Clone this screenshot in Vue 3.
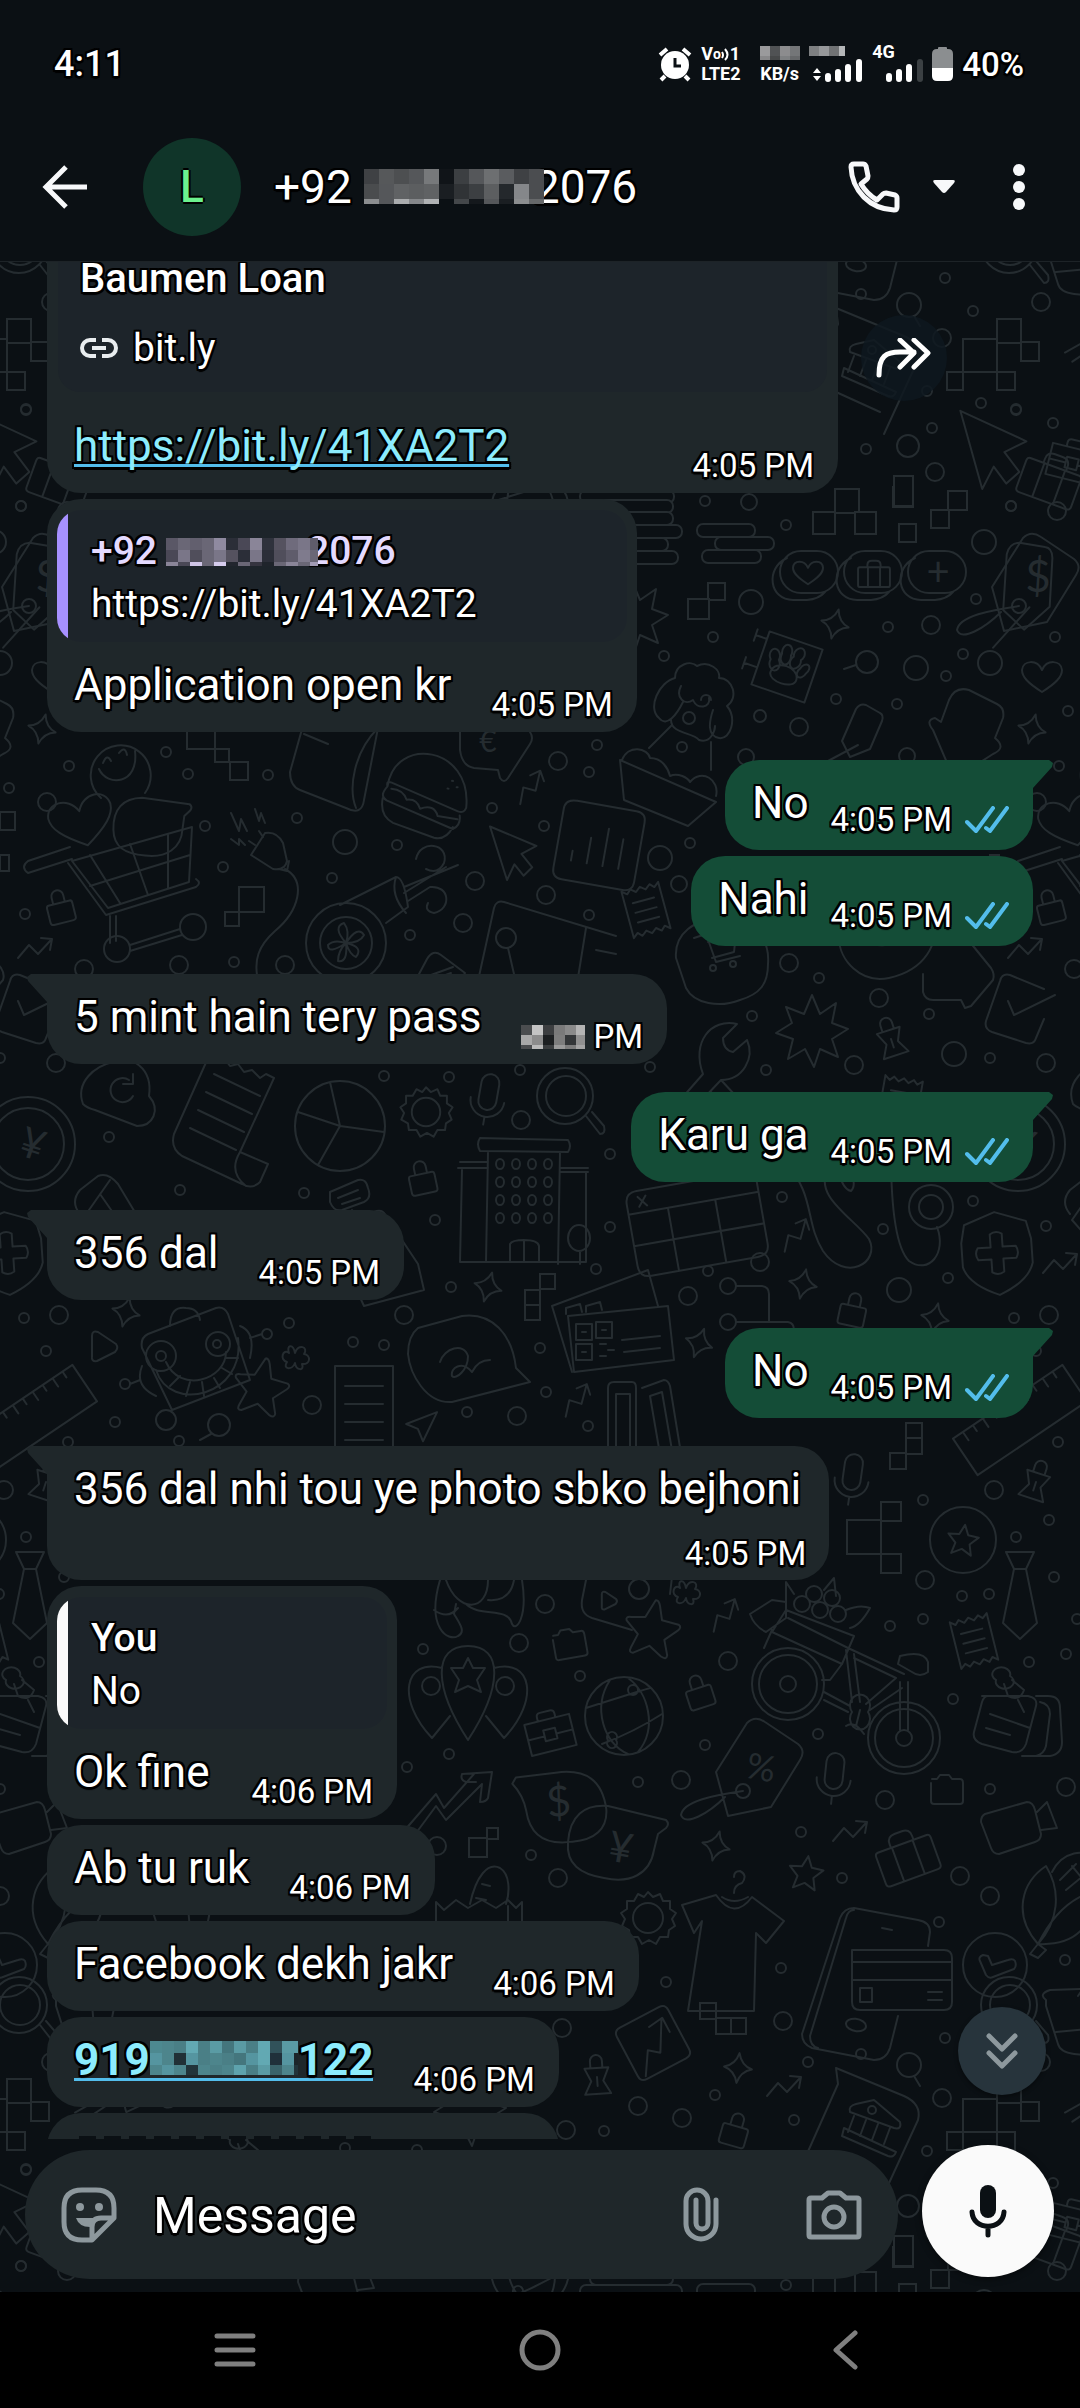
<script setup>
import { ref } from 'vue'

const draft = ref('')

const messages = [
  { id: 1, side: 'in', kind: 'preview', title: 'Baumen Loan', host: 'bit.ly', text: 'https://bit.ly/41XA2T2', time: '4:05 PM', link: true },
  { id: 2, side: 'in', quote: { who: 'contact', text: 'https://bit.ly/41XA2T2' }, text: 'Application open kr', time: '4:05 PM' },
  { id: 3, side: 'out', tail: true, text: 'No', time: '4:05 PM' },
  { id: 4, side: 'out', text: 'Nahi', time: '4:05 PM' },
  { id: 5, side: 'in', tail: true, text: '5 mint hain tery pass', time: 'PM', hiddenTime: true },
  { id: 6, side: 'out', tail: true, text: 'Karu ga', time: '4:05 PM' },
  { id: 7, side: 'in', tail: true, text: '356 dal', time: '4:05 PM' },
  { id: 8, side: 'out', tail: true, text: 'No', time: '4:05 PM' },
  { id: 9, side: 'in', tail: true, wide: true, text: '356 dal nhi tou ye photo sbko bejhoni', time: '4:05 PM' },
  { id: 10, side: 'in', quote: { who: 'me', name: 'You', text: 'No' }, text: 'Ok fine', time: '4:06 PM' },
  { id: 11, side: 'in', text: 'Ab tu ruk', time: '4:06 PM' },
  { id: 12, side: 'in', text: 'Facebook dekh jakr', time: '4:06 PM' },
  { id: 13, side: 'in', phone: ['919', '122'], time: '4:06 PM' },
]

// Pixelated masks: rows of grey levels or colours, one entry per cell
const masks = {
  title: {
    w: 180, h: 35,
    rows: [
      ['#3f4144', '#56585a', '#4d4f51', '#55575a', '#77797b', '#101418', '#3c3f42', '#55575a', '#6d6f71', '#5a5c5f', '#3f4144', '#4b4d50'],
      ['#4a4c4e', '#55575a', '#606264', '#5c5e60', '#606264', '#1a1e22', '#303336', '#3c3f42', '#5c5e60', '#24282c', '#85878a', '#4b4d50'],
      ['#8b8d8f', '#55575a', '#aaacae', '#85878a', '#b0b2b4', '#0b1014', '#44474a', '#14181c', '#55575a', '#1a1e22', '#8b8d8f', '#66686a'],
    ],
  },
  quote: {
    w: 152, h: 28,
    rows: [
      ['#5a5766', '#6a6776', '#625f6e', '#6a6776', '#8f8aa0', '#2b2e38', '#4a4856', '#8a8598', '#2f323c', '#55525f', '#6f6b7c', '#7a7688', '#5f5c6b'],
      ['#4a4856', '#7a7688', '#504e5b', '#6a6776', '#7a7688', '#55525f', '#2b2e38', '#7a7688', '#2b2e38', '#504e5b', '#5f5c6b', '#7f7b8d', '#6a6776'],
      ['#8a8598', '#4a4856', '#cfc5e6', '#6a6776', '#d6cced', '#22262e', '#6a6776', '#35343f', '#1f242b', '#6a6776', '#8a8598', '#6a6776', '#a29bb5'],
    ],
  },
  time: {
    w: 64, h: 24,
    rows: [
      ['#4b4d4f', '#c4c4c4', '#3c3e40', '#7a7a7a', '#8a8a8a', '#b4b4b4'],
      ['#a8a8a8', '#8c8c8c', '#1c1f21', '#7d7d7d', '#333638', '#909090'],
      ['#4a4c4e', '#bababa', '#3a3d3f', '#9a9a9a', '#7d7d7d', '#a4a4a4'],
    ],
  },
  phone: {
    w: 148, h: 34,
    rows: [
      ['#4d8990', '#4d858c', '#4a7f86', '#62a9b3', '#4a7f86', '#5a9ba4', '#44767d', '#5a9ba4', '#4a7f86', '#62a9b3', '#31525a', '#5a9ba4', '#5a9ba4'],
      ['#5595a0', '#4d858c', '#213036', '#5595a0', '#4a7f86', '#4d858c', '#4a7f86', '#44767d', '#5595a0', '#62a9b3', '#20303a', '#5595a0', '#1c2529'],
      ['#4d858c', '#5595a0', '#4d858c', '#22343a', '#4d858c', '#4a7f86', '#4d858c', '#5ea3ad', '#4a7f86', '#5a9ba4', '#3a636a', '#4d858c', '#22343a'],
    ],
  },
  speed: {
    w: 40, h: 14,
    rows: [['#9a9a9c', '#505254', '#8c8c8e', '#747678'], ['#88888a', '#464849', '#7e8082', '#66686a']],
  },
  sim: {
    w: 36, h: 10,
    rows: [['#7e8082', '#96989a', '#707274', '#b4b6b8']],
  },
}

// ---- Wallpaper: one 990 x 1760 tile of line doodles, repeated in both directions ----
const shapes = {
  sparkle: 'M0-15Q3-3 14 0Q3 3 0 15Q-3 3-14 0Q-3-3 0-15Z',
  lock: 'M-11-4H11Q13-4 13-1V13Q13 16 10 16H-10Q-13 16-13 13V-1Q-13-4-11-4ZM-6-4V-11A6 6 0 0 1 6-11V-4',
  arrow: 'M-17 10L-6-3L3 6L16-8M6-10L17-9L15 2',
  heart: 'M0 15C-14 6-20 0-20-7C-19-17-5-18 0-7C5-18 19-17 20-7C20 0 14 6 0 15Z',
  star: 'M0-17L5-6L17-5L8 4L11 16L0 10L-11 16L-8 4L-17-5L-5-6Z',
  bigstar: 'M0-27Q3-28 5-22L9-8L26-6Q30-4 26 0L14 11L19 26Q19 31 13 28L0 19L-15 28Q-20 29-18 23L-13 9L-26-3Q-28-7-22-7L-8-9Z',
  pin: 'M-12-9L12-9L6 4L13 17H-13L-6 4ZM-6-9V-16A6 6 0 0 1 6-16V-9M0 0V9',
  mic: 'M0-23A9 9 0 0 1 9-14V4A9 9 0 0 1-9 4V-14A9 9 0 0 1 0-23ZM-17 3A17 17 0 0 0 17 3M0 20V28',
  receipt: 'M-19-24L-14-20L-10-24L-5-20L0-24L5-20L10-24L14-20L19-24V24L14 20L10 24L5 20L0 24L-5 20L-10 24L-14 20L-19 24ZM-11-10H11M-11 0H11M-11 10H11',
  folder: 'M-15-12H-10L-7-16H2L5-12H13Q16-12 16-8V10Q16 13 13 13H-13Q-16 13-16 10V-8',
  gear: 'M0-26L5-21L12-24L15-17L22-17L22-9L28-5L24 1L27 8L21 12L20 19L12 19L8 26L1 22L-6 26L-10 19L-18 19L-19 12L-26 8L-23 1L-27-5L-21-9L-21-17L-14-17L-10-24L-4-21ZM15 0A15 15 0 1 1-15 0A15 15 0 1 1 15 0',
  tag: 'M-43-3L-12-52Q-4-60 6-53L39-31Q47-24 41-15L12 32L-31 41ZM-9 16A7 7 0 1 1-23 16A7 7 0 1 1-9 16M-16 16C-44 20-76 26-78 40C-74 52-50 38-34 22',
  smalltag: 'M-20 6L-6-26Q-2-32 4-30L18-22Q22-20 20-14L8 14L-12 22ZM-4 10L-34 26',
  coins: 'M-8-21H8A21 21 0 0 1 8 21H-8A21 21 0 0 1-8-21M-22-14C-44-4-40 28-16 28H-2Q10 27 16 20',
  suitcase: 'M-26-14H26Q29-14 29-10V18Q29 22 25 22H-25Q-29 22-29 18V-10Q-29-14-26-14ZM-12-14V-18Q-12-26-4-26H4Q12-26 12-18V-14M-11-14V22M11-14V22',
  briefcase: 'M-23-14H23V18H-23ZM-9-14V-18Q-9-22-5-22H5Q9-22 9-18V-14M-23 2H-6M6 2H23M-6-4H6V7H-6Z',
  paw: 'M-28-28H28V28H-28ZM-28-20H-40M-40-26V-14M-28 10H-42M-42 4V16M-14 10C-14-4 12-4 13 9C14 20-14 20-14 10M-18-2A5 7 -20 1 1-10-4A5 7 -20 1 1-18-2M-9-11A5 7 -6 1 1 0-12A5 7 -6 1 1-9-11M3-12A5 7 10 1 1 11-11A5 7 10 1 1 3-12M13-3A4 6 24 1 1 20 0A4 6 24 1 1 13-3',
  burst: 'M0-36L8-17L24-28L20-8L36-2L20 8L26 26L8 18L2 36L-7 18L-24 28L-19 8L-36 2L-20-8L-26-24L-8-17Z',
  cursor: 'M-22-28L31-10L15 0L28 14L19 24L8 12L1 30Z',
  shield: 'M0-41L31-30L35-12V12Q30 30 0 42Q-30 30-35 12V-12L-31-30ZM-6-19Q0-23 6-19V-6H19Q23 0 19 6H6V19Q0 23-6 19V6H-19Q-23 0-19-6H-6Z',
  ruler: 'M-66-22H66V22H-66ZM-54-22V-12M-42-22V-15M-30-22V-12M-18-22V-15M-6-22V-12M6-22V-15M18-22V-12M30-22V-15M42-22V-12M54-22V-15',
  tie: 'M-14-45H14L6-28H-6L-14-45ZM-6-28L-17 26L0 42L17 26L6-28',
  xmark: 'M0-4C3-14 14-10 9-3C16-2 16 8 7 7C10 14 1 14 0 6C-3 14-13 12-8 5C-16 3-12-9-6-4C-9-12-2-14 0-4Z',
  play: 'M-12-11Q-12-17-6-15L12-3Q15 1 11 5L-7 14Q-13 15-12 9Z',
  plane: 'M16-16L-14-2L-2 2L4 14Z',
  check: 'M32 0A32 32 0 1 1-32 0A32 32 0 1 1 32 0M-12-10Q-17-8-15-4L-9 10Q-6 14-2 12L19 4Q22 1 20-4Q18-7 13-5L-3 0L-7-9Z',
  checkbox: 'M24-16L-10-30Q-18-32-20-24L-34 16Q-36 24-28 27L6 38Q14 40 16 33L24 14M-12-4L-6 10L35-10',
  speech: 'M-52-26L-48-32L-8-34C24-36 38-22 40 6C40 26 26 36 4 36C-24 38-38 26-40 2Q-42-14-52-26Z',
  speechright: 'M52-22L-6-36C-30-38-44-26-46 0C-48 22-34 32-10 36C16 42 36 32 40 8L44-8L52-14Q56-18 52-22Z',
  globe: 'M39 0A39 39 0 1 1-39 0A39 39 0 1 1 39 0M-14-36C-32-8-20 28 4 38M4-38C24-24 34 12 14 36M-38-8Q6-22 26-28M-22 28Q10 16 38-2M-16 24A5 5 0 1 1-8 24A5 5 0 1 1-16 24M4-26A5 5 0 1 1 14-26A5 5 0 1 1 4-26',
  notes: 'M-34-24H12Q22-22 20-14L10 24Q6 34-4 32L-34 24Q-44 20-42 12L-34-18Q-32-24-28-24M20-24H32Q44-24 44-12L46 22Q46 34 34 36H6M24-18Q34-16 34-6L30 26Q28 34 20 36M-26-6L14 8M-30 8L-6 15M-20-40A9 7 0 1 1-6-44A9 7 0 1 1-20-40M-12-36L-8-24Q4-18 8-30L-4-40M2-20L8-8',
  camcorder: 'M-28-16L14-28Q20-28 22-20L28 4Q28 10 22 12L-14 24Q-20 24-22 18L-32-8Q-32-14-28-16ZM24-18L34-28L44-2L28 0',
  tee: 'M-18-40L-52-30L-40-2L-32-14L-46 76H20L22-2L32 8L50-14L18-38Q0-14-18-40ZM-12-38Q0-30 14-38M0-42Q0-50 8-52Q14-60 6-64Q0-64 0-58',
  bike: 'M-22 0A36 36 0 1 1-94 0A36 36 0 1 1-22 0M-29 0A29 29 0 1 1-87 0A29 29 0 1 1-29 0M-50 0A8 8 0 1 1-66 0A8 8 0 1 1-50 0M94 54A36 36 0 1 1 22 54A36 36 0 1 1 94 54M87 54A29 29 0 1 1 29 54A29 29 0 1 1 87 54M66 54A8 8 0 1 1 50 54A8 8 0 1 1 66 54M-22 8L4 22M-22 16L2 28M0-34L6 18M8-30L14 18M54-2V46M62-2V46M-58-66L2-36L58-10M8-26L50-6L20 20M24 26L56 4M54-28Q78-34 82-22V-12Q74-6 66-12L52-20ZM-96-70L-74-84L-60-82L-60-66L-80-52Q-92-58-96-70ZM-60-74L8-48L-4-20L-74-52ZM-74-54L-82-36M-4-20L-16-4H-24M-60-78V-102L-52-90M-52-80A8 8 0 1 1-36-80A8 8 0 1 1-52-80M-40-90A8 8 0 1 1-24-90A8 8 0 1 1-40-90M-34-74A8 8 0 1 1-18-74A8 8 0 1 1-34-74M-22-86A8 8 0 1 1-6-86A8 8 0 1 1-22-86M-16-70A8 8 0 1 1 0-70A8 8 0 1 1-16-70M-22-94L-12-106L-10-88M0-74Q14-80 24-76Q14-58 4-56M6 28A10 11 0 1 1 22 28A10 11 0 1 1 6 28M14 26L10 42M0 42Q8 36 18 50',
  cart: 'M-58 0L62-34L59 21L-22 47ZM-62 2L-24 54L66 26Q72 22 66 18M-58-2L-102 12Q-110 6-102 0L-60-14M-40-6L-10 42M0-17L18 34M38-27V27M-40 25L60-6M-20 55V82M-14 55V80M0 88A13 13 0 1 1-26 88A13 13 0 1 1 0 88M76 66A13 13 0 1 1 50 66A13 13 0 1 1 76 66M0 84L50 68M0 90L52 74',
  smiley: 'M-20 23A30 30 0 1 1 24 18M-22-6C-14 12 18 10 14-24M-18-12Q-14-22-10-14M-2-22Q4-30 6-20',
  burger: 'M-38-6C-34-58 44-52 42 10Q40 16 34 14L-34-10Q-40-12-38-6ZM-38-6Q-46 4-38 8L30 32Q38 28 36 18M-34-4Q-22-4-18 6Q-8 4-4 14Q10 8 14 20L34 22M-42 6Q-44 24-30 30L12 42Q24 44 30 30M26-16H27M22-8H23M31-10H32',
  fan: 'M40 0A40 40 0 1 1-40 0A40 40 0 1 1 40 0M26 0A26 26 0 1 1-26 0A26 26 0 1 1 26 0M0 0Q-14-16-2-20Q4-12 0 0Q12-18 18-8Q14 0 0 0Q18 4 10 14Q4 12 0 0Q2 20-8 18Q-8 8 0 0Q-18 12-18 2Q-12-4 0 0M-6-38L50-66Q58-66 62-36L40-20M50-66Q44-48 60-30M58-56L112-78M58-50L100-76M70-84C74-104 104-100 98-80Q92-68 80-74M62-42L84-56C104-58 106-34 88-30Q78-32 82-40',
  plug: 'M-18 4L-4-18Q8-20 14-8L18 10Q16 20 4 18ZM-6-14L-10-20M-14-6L-20-10M10 18L18 20L20 10M16 18C38 30 30 60 6 80C-12 96-14 110-12 124M-38-38L-30-20L-28-32L-22-20M-14-42L-10-30L-8-38L-4-28M-38-12L-30-6L-30-12L-24-6',
  coin: 'M47 0A47 47 0 1 1-47 0A47 47 0 1 1 47 0M36 0A36 36 0 1 1-36 0A36 36 0 1 1 36 0',
  cloud: 'M-36 12C-44-10-24-26-6-30C12-38 34-24 30 4C42 18 34 34 18 34L-24 18Q-32 16-36 12ZM14 4A12 12 0 1 1 10-12M14-18L14-8L4-8',
  scroll: 'M-24-54L-58 22Q-62 36-50 44L10 72Q20 78 28 70L36 52L8 40L42-34L34-38L28-34L20-42L12-40L6-48L-2-46L-8-54M8 40Q-4 60 14 74M-18-38L28-16M-26-20L20 2M-34-2L12 20M-42 16L4 38',
  pie: 'M45 0A45 45 0 1 1-45 0A45 45 0 1 1 45 0M0 0L-10-44M0 0L44 6M0 0L-22 39M0 0L-42-14',
  magnifier: 'M27 0A28 28 0 1 1-29 0A28 28 0 1 1 27 0M20 0A20 20 0 1 1-20 0A20 20 0 1 1 20 0M20 20L34 38Q40 38 38 30L26 16',
  building: 'M-44-55Q-48-62-44-68L44-66Q48-60 44-54ZM-36-54L-38 56M36-54L34 58M-66-38H-36M-64-44H-36M36-38H64M36-34H64M-62-36L-64 56H62V-34M-14 56V38Q-12 34 0 34Q14 34 15 40V56M0 34V56M66 32A11 13 0 1 1 44 32A11 13 0 1 1 66 32M56 46V58',
  windows: 'M-20-38A4 5 0 1 1-28-38A4 5 0 1 1-20-38M-4-38A4 5 0 1 1-12-38A4 5 0 1 1-4-38M12-38A4 5 0 1 1 4-38A4 5 0 1 1 12-38M28-38A4 5 0 1 1 20-38A4 5 0 1 1 28-38',
  wrench: 'M-64 70L-22 22C-34-10-14-34 12-28L-2-14Q-2-2 8 0L22-12C30 6 18 28-4 28L-40 66M-4 28L22 56M-14 40L14 70',
  cartbubble: 'M-44-10C-46-34-26-50 4-50C34-48 50-30 48-4C48 16 40 26 20 32C0 40-26 36-34 20ZM-26-30L-14-34L-4-6L20-12M-12-26L16-34L14-16L-8-10M-4 0A3 3 0 1 1-10 0A3 3 0 1 1-4 0M16-4A3 3 0 1 1 10-4A3 3 0 1 1 16-4',
  calendar: 'M-54-42H54Q66-42 66-30V32Q66 44 54 44H-54Q-66 44-66 32V-30Q-66-42-54-42ZM-66-20H66M-66 12H66M-26-20V44M22-20V44M-54-36L-46-26M-46-36L-54-26',
  stetho: 'M-60-60C-30-30-40 0-22 28C0 60 36 40 24 16C10-4-34-28-16-54C4-62 14-40 6-32Q-4-34-8-60M46-70C46-20 50 24 64 38C84 52 102 30 92 4M108-16A22 22 0 1 1 64-16A22 22 0 1 1 108-16M98-16A12 12 0 1 1 74-16A12 12 0 1 1 98-16',
  tickets: 'M-62-16L34-52L44-16M-62-16L-42 50M-46-6L54-16L60 38L-40 50ZM-38 2H-22V18H-38ZM-18 0H-2V16H-18ZM-38 22H-22V38H-38ZM8 18L46 14M10 30L46 26M-14 22H-8M-6 28H0M-14 34H-8M-32 10H-28M-12 8H-8M-32 30H-28M-48-8V-14L-34-18L-32-10M-28-10V-16L-14-20L-12-12',
  books: 'M-30 60V-24Q-30-30-24-30H-6Q-2-30-2-24V60M-22 60V-18H-8V60M4-24L26-32Q30-32 32-26L46 60M12-16L24-20L36 50L24 54Z',
  robot: 'M-42-28L26-54Q34-56 38-48L60 18L-18 48L-48-14Q-50-24-42-28ZM-14-6A15 15 0 1 1-44-6A15 15 0 1 1-14-6M-24-6A5 5 0 1 1-34-6A5 5 0 1 1-24-6M40-18A12 12 0 1 1 16-18A12 12 0 1 1 40-18M31-18A4 4 0 1 1 23-18A4 4 0 1 1 31-18M-34 8C-20 52 56 34 48-24M-24 0C-10 32 36 18 36-10M-20 24L-10 14M-4 34L0 20M14 34L12 20M30 26L24 16M42 12L32 6M48-4L36-4M-20-36Q-20-56-4-54Q8-54 10-42M-48 4Q-56 24-34 34M-50 18L-60 22A5 5 0 1 1-70 22A5 5 0 1 1-60 22M50-36Q66-30 60-4M60-24L72-28A5 5 0 1 1 82-28A5 5 0 1 1 72-28M-14 58A10 10 0 1 1-34 58A10 10 0 1 1-14 58',
  page: 'M-29-42H29V46H-29ZM-19-22H19M-19-4H19M-19 14H19M-19 32H19',
  signature: 'M-50-34L-6-46C24-50 44-28 48 6L62 20L-16 40C-42 42-58 12-60-8Q-60-26-50-34ZM-28 0C-24-14-4-20 0-6C0 8-12 18-16 14C-18 6-6-2 4 10Q10-2 22-2',
  croissant: 'M-38-28C-52 20-30 34-20 28C-12 24-18 16-24 6L-22-4M-44 2Q-30 12-20 0M-32-28C-20 6 10 4 10-28M-12-4C2 10 30-2 34 16C38 24 50 10 44-28M10-8Q32-6 36-28',
  balloons: 'M0-48C36-48 34-6 0 46C-34-6-36-48 0-48M0-36L5-26L17-26L9-14L13-2L0-8L-13-2L-9-14L-17-26L-5-26ZM-26-26C-64-36-72 6-36 44L-18 22M26-26C64-36 72 6 36 44L18 22M-28-8A9 9 0 1 1-46-8A9 9 0 1 1-28-8M46-8A9 9 0 1 1 28-8A9 9 0 1 1 46-8',
  growth: 'M-44 40L-6-4L2 10L32-24M-34 46L-6 8L4 22L40-14L38 4Q44 4 46 0L50-26L20-24Q18-18 24-16L34-16',
  bag: 'M-46 60V4L-38 12L-26 2L-14 10L0 2L14 10L26 2L34 10L40 4V60M26 8V60M-12 6C-6-22 6-36 18-30C28-24 28-6 24 6M0-14L8-12M-6 0L4 2',
  phonecard: 'M60-30L62-44Q62-54 50-56L-14-68Q-24-68-28-58L-66 58Q-66 68-56 72L6 84Q18 84 22 72L30 40M-14-66Q-20-66-22-58L-58 60Q-58 70-50 72M-16-26H76Q84-26 84-18V26Q84 34 76 34H-8Q-16 34-16 26ZM-16-14H84M-16 4H84M-8 12H4V26H-8ZM60 16H74M60 24H74M-2 50A10 6 10 1 1-22 48A10 6 10 1 1-2 50M14-48L24-46',
  corn: 'M-24 42C-50 12-40-20-16-36C0-10-4 20-24 42C-8 10 10-4 30-10C34 22 14 44-24 42M-24 42L-32 52L-24 56L-16 48ZM-10-30C0-50 24-56 34-40M-2-22L14-38M4-12L26-30M10-36L28-14',
  chartcard: 'M-22-29H22Q29-29 29-22V22Q29 29 22 29H-22Q-29 29-29 22V-22Q-29-29-22-29ZM-22 26L-8 4L2 12L18-16M4-16L20-18L20-2',
  bars: 'M-28-40H32Q42-40 42-30V30Q42 40 32 40H-30Q-40 40-40 30V-30Q-40-40-28-40ZM-24 10V20M-8-6V20M8-18V20M24-10V20',
  bank: 'M-34-80L34-52Q52-44 48-28L14 46M-34-80L-32-64L-64 8M-20-36Q-22-42-14-44L4-48L30-26Q32-18 24-20ZM-16-32L-22-16M-4-28L-10-12M8-24L2-8M20-20L14-4M-26-20L26 4Q24 10 18 8L-28-12ZM6-38A4 4 0 1 1-2-38A4 4 0 1 1 6-38M-34 4L10 24',
  icecream: 'M-28-22Q-36-28-24-32L34-34L22 26Q14 34 0 32Q-14 30-16 22L-28-16ZM-18 10L26 6M4-26L22-52Q30-52 28-44L14-26M8-18L12 28',
  dog: 'M-22-34C-22-48-6-52 0-46C12-52 24-42 22-34C36-34 42-14 30-6C40 6 34 28 22 26C10 24 12 10 16-2M-22-34C-38-30-50-4-38 6C-30 16-20 2-14-10M-26 8C-26 22-4 20 2 28C14 32 18 18 18 14M-16-26C-22-14-12-6-4-12C0-2 14-4 12-14M4-12A4 4 0 1 1 14-12M-2 6A6 6 0 1 1-14 6A6 6 0 1 1-2 6M-26 14L-48 36M14 30V58',
  tray: 'M-48-24L48 18L20 42L-44 16ZM-46-24C-40-40-20-36-18-26C-6-26 0-16 2-8C10-12 20-6 22-2C34-16 52-4 48 12',
  mitt: 'M-14-34Q-8-48 6-44L34-30Q42-26 40-16L32 4Q44 14 30 20L2 38H-12L-30-4Q-38-14-28-16L-22-12Z',
  refuel: 'M-28 28L-10-6Q-4-16 4-10L28 8L14 30M-6 10L16 2M-8 16L14 8M-10 22L12 14',
  map: 'M-44 60L-26-22Q-24-30-16-28L96 6M66-2L56 60M-4 8A10 10 0 1 1-24 8A10 10 0 1 1-4 8M-12 18L-6 44M76 20L96 24',
  phonebook: 'M-26-20L-8-34Q2-38 12-26L48 34M-26-20Q-36-8-26 4M4-30L-24 10L20 60M-6-16L40 50',
  chatarrow: 'M-18-14L10-26Q18-28 20-18Q24-8 16-4L-6 4Q-14 6-18-4ZM-10-8L10-16M-6-2L12-8M4 4L10 14L26 6Q34 2 38 10L70 58L76 84L16 100L4 74',
  toast: 'M-14-60L-28-10Q-28 4-18 8L28 26Q44 34 46 18L60-54M60-54C36-30 30 6 38 26M-14-48L10-38',
  videocard: 'M-30-40L-38 0Q-40 14-28 18L12 30M54-40L50-6',
  medal: 'M33 0A33 33 0 1 1-33 0A33 33 0 1 1 33 0',
  euro: 'M-34-50V0Q-32 16-20 18L4 20L6 28Q10 34 14 28L36-6Q40-12 36-18L24-40',
  target: 'M46-30C56-8 40 20 4 28C-24 34-46 10-46-12M24-30C26-2-24 8-30-28M38 24V42Q40 50 48 50L76 50L80 58L86 56L108 30Q110 24 106 18L80-14',
}

const doodles = [
  ['sparkle', 835, 624, 14], ['sparkle', 42, 729, 14], ['sparkle', 803, 1284, 12], ['sparkle', 699, 1343, 20],
  ['sparkle', 935, 1318, 12], ['sparkle', 488, 1287, 16], ['sparkle', 126, 1312, 14], ['sparkle', 716, 1846, 14], ['sparkle', 738, 2068, 6],
  ['lock', 60, 907, -14], ['lock', 422, 1178, -12], ['lock', 853, 1310, 12], ['lock', 699, 1692, -18], ['lock', 735, 2130, 16],
  ['arrow', 35, 948], ['arrow', 530, 787, -30], ['arrow', 795, 1235, -28], ['arrow', 576, 1400, -28], ['arrow', 724, 1615, -28],
  ['arrow', 850, 1831], ['arrow', 784, 2086], ['arrow', 70, 1263],
  ['heart', 1042, 677], ['star', 806, 1873, 8], ['star', 963, 1540, 8, 0.9], ['bigstar', 261, 1385, 10], ['bigstar', 652, 1627, 8],
  ['pin', 891, 1039, -18], ['pin', 1036, 1482, 18], ['pin', 597, 2077, -4],
  ['mic', 488, 1097, 10], ['mic', 852, 1477, 8], ['mic', 834, 1776, 6],
  ['receipt', 646, 910, -15], ['receipt', 974, 1641, -14], ['receipt', 900, 1102, 10],
  ['folder', 570, 1645, -10], ['folder', 947, 1791], ['gear', 426, 1112, 0, 0.95], ['gear', 648, 1918],
  ['tag', 1035, 590], ['tag', 759, 1775], ['smalltag', 862, 735],
  ['coins', 809, 572], ['coins', 873, 572], ['coins', 937, 572],
  ['heart', 808, 573, 0, 0.75], ['suitcase', 874, 575, 0, 0.55], ['suitcase', 907, 1857, -20], ['briefcase', 550, 1733, -14], ['briefcase', 1072, 2222, 14],
  ['paw', 787, 667, 19], ['burst', 812, 1031], ['burst', 632, 617], ['cursor', 508, 853, 4, 0.9], ['cursor', 985, 2210, 6, 1.3],
  ['shield', 997, 1253, -4], ['ruler', 30, 1420, -34], ['tie', 30, 1597], ['xmark', 295, 1357], ['xmark', 686, 1592],
  ['play', 104, 1347], ['play', 609, 1601, 0, 0.6], ['plane', 420, 1427, 4], ['check', 995, 1965], ['checkbox', 1020, 1005],
  ['speech', 566, 1806, -4], ['speechright', 614, 1842], ['globe', 624, 1716], ['notes', 1016, 1720], ['camcorder', 1013, 1830],
  ['tee', 734, 1935], ['bike', 846, 1684], ['cart', 130, 861], ['smiley', 121, 775], ['speechright', 150, 826, -6, 0.8], ['heart', 82, 822, -14, 1.6],
  ['burger', 425, 795, 4], ['fan', 346, 943], ['plug', 269, 851], ['coin', 28, 1144], ['cloud', 119, 1092], ['scroll', 232, 1112],
  ['pie', 340, 1126], ['magnifier', 566, 1096], ['building', 524, 1206], ['windows', 524, 1202], ['windows', 524, 1220], ['windows', 524, 1238], ['windows', 524, 1256],
  ['wrench', 725, 1052], ['cartbubble', 720, 968], ['calendar', 697, 1223, -10], ['stetho', 845, 1223], ['tickets', 614, 1322],
  ['books', 638, 1412], ['robot', 190, 1362], ['page', 364, 1408], ['signature', 468, 1362], ['croissant', 478, 1608],
  ['balloons', 468, 1694], ['growth', 442, 1798], ['bag', 482, 1898], ['phonecard', 868, 1976], ['corn', 1062, 1902],
  ['chartcard', 653, 2043, -28], ['bars', 598, 845, 10], ['bank', 870, 2148], ['icecream', 1074, 2022], ['dog', 697, 712],
  ['tray', 668, 784], ['mitt', 963, 734], ['refuel', 437, 965], ['map', 520, 930], ['phonebook', 106, 1210], ['chatarrow', 348, 1206],
  ['toast', 318, 782], ['videocard', 620, 1600], ['medal', 963, 1540], ['euro', 494, 750], ['target', 885, 950], ['growth', 130, 2090, 20],
  ['notes', 250, 2180], ['burst', 470, 2110], ['suitcase', 60, 2240, 20], ['camcorder', 330, 2290], ['globe', 530, 2270],
  ['smalltag', 40, 590, -20, 1.6], ['icecream', 180, 1925], ['magnifier', 20, 2005],
]

const glyphs = [
  ['$', 1038, 592, 0, 44], ['$', 560, 1816, -6, 42], ['¥', 618, 1862, 10, 42], ['¥', 28, 1158, 18, 42], ['€', 488, 752, 0, 30], ['%', 759, 1780, 10, 36], ['+', 938, 586, 0, 40],
]

const boxes = [
  [835, 489, 24, 24], [813, 512, 22, 22], [855, 512, 21, 22], [894, 476, 19, 30], [948, 491, 19, 19], [931, 510, 18, 18], [899, 524, 17, 18],
  [708, 583, 17, 17], [688, 599, 21, 20], [239, 887, 25, 25], [225, 912, 14, 14], [187, 728, 28, 21], [215, 749, 14, 13], [230, 762, 18, 18],
  [540, 1274, 15, 15], [525, 1290, 15, 15], [525, 1305, 15, 15], [847, 1520, 34, 34], [881, 1502, 20, 19], [881, 1554, 20, 19],
  [906, 1423, 16, 16], [906, 1438, 16, 16], [890, 1453, 16, 16], [487, 1828, 11, 11], [469, 1838, 18, 19], [700, 2003, 16, 16],
  [716, 2018, 15, 16], [731, 2018, 15, 16], [963, 2099, 34, 33], [997, 2079, 24, 24], [1021, 2102, 18, 19], [947, 2132, 16, 18], [997, 2132, 18, 18],
  [893, 2247, 20, 20], [0, 812, 15, 18], [0, 855, 9, 16],
]

const dots = [
  [705, 501, 5], [749, 502, 8], [786, 525, 5], [1011, 506, 5], [67, 511, 9], [984, 542, 12], [751, 602, 12], [713, 637, 5], [664, 656, 5],
  [888, 627, 5], [931, 625, 9], [976, 599, 5], [1055, 637, 5], [963, 654, 5], [990, 663, 12], [916, 668, 12], [946, 676, 5], [867, 662, 11],
  [897, 704, 5], [836, 699, 5], [760, 716, 6], [799, 727, 9], [78, 711, 5], [682, 747, 5], [746, 757, 8], [907, 756, 8], [690, 843, 5],
  [660, 858, 12], [679, 884, 8], [789, 963, 9], [69, 766, 5], [166, 752, 5], [188, 774, 5], [268, 775, 5], [9, 788, 5], [47, 802, 9],
  [205, 826, 5], [297, 818, 5], [345, 842, 12], [397, 845, 5], [223, 867, 5], [332, 878, 5], [492, 808, 5], [544, 826, 5], [558, 761, 9],
  [589, 772, 5], [597, 745, 5], [475, 881, 9], [546, 895, 9], [463, 923, 9], [589, 915, 5], [410, 935, 5], [25, 914, 5], [234, 962, 5],
  [179, 965, 9], [285, 965, 9], [84, 969, 9], [56, 1063, 9], [384, 1076, 5], [449, 1077, 5], [520, 1070, 5], [521, 1120, 9], [109, 1137, 5],
  [180, 1190, 5], [304, 1193, 5], [610, 1154, 5], [819, 978, 5], [879, 998, 9], [929, 1014, 5], [752, 1016, 5], [954, 1054, 12], [990, 1058, 5],
  [854, 1065, 9], [766, 1070, 5], [650, 1067, 5], [610, 1227, 5], [596, 1269, 5], [708, 1271, 5], [760, 1262, 9], [688, 1296, 9], [782, 1197, 5],
  [883, 1229, 5], [973, 1201, 5], [1046, 1226, 5], [899, 1290, 12], [948, 1278, 5], [1014, 1318, 5], [59, 1315, 9], [540, 1348, 5], [546, 1392, 5],
  [517, 1416, 9], [588, 1426, 5], [728, 1286, 8], [728, 1322, 8], [435, 1220, 5], [404, 1315, 9], [451, 1287, 5], [353, 1342, 5], [384, 1345, 5],
  [289, 1323, 5], [46, 1351, 5], [312, 1405, 9], [115, 1422, 5], [179, 1441, 5], [68, 1442, 5], [467, 1412, 5], [219, 1425, 11], [26, 1537, 5],
  [64, 1577, 5], [4, 1490, 9], [545, 1604, 9], [519, 1643, 9], [423, 1649, 5], [639, 1589, 10], [580, 1676, 5], [728, 1661, 9], [705, 1745, 5],
  [638, 1782, 5], [681, 1780, 9], [531, 1855, 5], [558, 1878, 9], [818, 1734, 5], [953, 1699, 5], [885, 1800, 9], [801, 1832, 5], [842, 1878, 5],
  [990, 1789, 5], [1066, 1787, 9], [960, 1876, 9], [990, 1896, 9], [939, 1922, 5], [890, 1626, 5], [923, 1619, 5], [962, 1596, 5], [989, 1594, 5],
  [925, 1580, 9], [923, 1500, 5], [1049, 1520, 5], [1077, 1619, 5], [1029, 1662, 5], [1066, 1654, 5], [666, 1982, 5], [781, 1968, 5], [783, 2021, 9],
  [861, 2054, 5], [945, 2038, 5], [808, 2062, 5], [909, 2065, 12], [715, 2095, 5], [638, 2106, 9], [682, 2118, 9], [794, 2120, 5], [942, 2098, 9],
  [604, 2131, 5], [927, 2151, 5], [908, 2206, 11], [1053, 2183, 5], [1065, 1960, 5], [973, 2071, 5], [1041, 2062, 9], [932, 2188, 5], [981, 2163, 5],
  [1016, 2169, 5], [866, 2209, 5], [935, 2232, 9], [26, 2170, 5], [21, 2266, 5], [562, 2028, 9], [566, 2130, 9], [449, 1754, 5], [407, 1767, 5],
  [437, 1846, 9], [345, 2148, 5], [417, 2150, 5],
]

const pills = [
  [580, 490, 94], [570, 500, 103], [590, 512, 83], [580, 525, 102], [600, 538, 68], [590, 551, 88],
  [697, 524, 58], [715, 537, 59], [702, 550, 59],
]

const lines = 'M856 665L844 669M211 1434L200 1440M914 2076L920 2086M736 1286H762Q769 1287 769 1294V1322M736 1322H788Q794 1323 794 1330'

const offsets = []
for (const y of [-1760, 0, 1760]) for (const x of [-990, 0, 990]) offsets.push([x, y])
</script>

<template>
  <div class="app">
    <div class="statusbar">
      <span class="clock">4:11</span>
      <div class="indicators">
        <svg class="alarm" width="34" height="36" viewBox="0 0 34 36" aria-hidden="true">
          <circle cx="17" cy="19" r="14" fill="#fff" />
          <path d="M2 9L9 3M32 9L25 3M7 30L3 34M27 30L31 34" stroke="#fff" stroke-width="4" fill="none" />
          <path d="M17 12V20H23" stroke="#0b1014" stroke-width="3" fill="none" />
        </svg>
        <div class="volte">
          <span class="volte-top">V<small>o</small><svg width="9" height="14" viewBox="0 0 9 14" aria-hidden="true"><path d="M1 5Q3 8 1 11M4 2Q9 8 4 13" fill="none" stroke="#fff" stroke-width="2" /></svg>1</span>
          <span>LTE2</span>
        </div>
        <div class="speed">
          <svg :width="masks.speed.w" :height="masks.speed.h" aria-hidden="true">
            <template v-for="(row, r) in masks.speed.rows" :key="r">
              <rect v-for="(c, i) in row" :key="i" :x="i * 10" :y="r * 10" width="10" height="10" :fill="c" />
            </template>
          </svg>
          <span>KB/s</span>
        </div>
        <div class="sim">
          <svg :width="masks.sim.w" :height="masks.sim.h" aria-hidden="true">
            <rect v-for="(c, i) in masks.sim.rows[0]" :key="i" :x="i * 10" y="0" width="10" height="10" :fill="c" />
          </svg>
          <svg width="54" height="24" viewBox="0 0 54 24" aria-hidden="true">
            <path d="M4 15L8 10L12 15ZM4 18L8 23L12 18Z" fill="#fff" />
            <path d="M19 18V21M29 14V21M39 9V21M50 4V21" stroke="#fff" stroke-width="6" stroke-linecap="round" />
          </svg>
        </div>
        <div class="sim">
          <span class="net">4G</span>
          <svg width="54" height="24" viewBox="0 0 54 24" aria-hidden="true">
            <path d="M17 18V21M27 14V21M37 9V21" stroke="#fff" stroke-width="6" stroke-linecap="round" />
            <path d="M48 4V21" stroke="#3b4043" stroke-width="6" stroke-linecap="round" />
          </svg>
        </div>
        <svg class="battery" width="21" height="34" viewBox="0 0 21 34" aria-hidden="true">
          <path d="M6 1Q6 0 7 0H14Q15 0 15 1V2H16Q21 2 21 7V21H0V7Q0 2 5 2H6Z" fill="#8b8e90" />
          <path d="M0 21H21V29Q21 34 16 34H5Q0 34 0 29Z" fill="#fff" />
        </svg>
        <span class="percent">40%</span>
      </div>
    </div>

    <header class="header">
      <button class="icon-btn back" aria-label="Back">
        <svg width="46" height="46" viewBox="0 0 46 46"><path d="M24 3L4 23L24 43M4 23H45" fill="none" stroke="#f7f8fa" stroke-width="5" /></svg>
      </button>
      <div class="avatar">L</div>
      <h1 class="title outlined">
        <span>+92</span>
        <span class="mask mask-title">
          <svg :width="masks.title.w" :height="masks.title.h" aria-hidden="true">
            <template v-for="(row, r) in masks.title.rows" :key="r">
              <rect v-for="(c, i) in row" :key="i" :x="i * 15" :y="r * 15" width="15" height="15" :fill="c" />
            </template>
          </svg>
        </span>
        <span class="tail-digits">2076</span>
      </h1>
      <button class="icon-btn call" aria-label="Call">
        <svg width="52" height="52" viewBox="0 0 52 52">
          <path d="M6 3H15Q17 3 18 5L20 15Q20 17 19 18L13 23Q19 33 29 39L35 33Q36 32 38 32L47 34Q49 35 49 37V46Q49 49 46 49C22 48 4 30 3 6Q3 3 6 3Z" fill="none" stroke="#f7f8fa" stroke-width="5" stroke-linejoin="round" />
        </svg>
        <svg class="caret" width="24" height="16" viewBox="0 0 24 16"><path d="M3 1H21Q24 1 22 4L14 13Q12 15 10 13L2 4Q0 1 3 1Z" fill="#f7f8fa" /></svg>
      </button>
      <button class="icon-btn more" aria-label="More options">
        <svg width="12" height="46" viewBox="0 0 12 46"><circle cx="6" cy="6" r="6" fill="#f7f8fa" /><circle cx="6" cy="23" r="6" fill="#f7f8fa" /><circle cx="6" cy="40" r="6" fill="#f7f8fa" /></svg>
      </button>
    </header>

    <main class="chat">
      <svg class="wallpaper" aria-hidden="true">
        <defs>
          <g id="tile">
            <circle v-for="(d, i) in dots" :key="'d' + i" :cx="d[0]" :cy="d[1]" :r="d[2]" />
            <rect v-for="(b, i) in boxes" :key="'b' + i" :x="b[0]" :y="b[1]" :width="b[2]" :height="b[3]" />
            <rect v-for="(p, i) in pills" :key="'p' + i" :x="p[0]" :y="p[1]" :width="p[2]" height="13" rx="6" />
            <path
              v-for="(s, i) in doodles"
              :key="'s' + i"
              :d="shapes[s[0]]"
              :transform="`translate(${s[1]} ${s[2]}) rotate(${s[3] || 0}) scale(${s[4] || 1})`"
              class="ink"
            />
            <path :d="lines" />
            <text
              v-for="(g, i) in glyphs"
              :key="'g' + i"
              :transform="`translate(${g[1]} ${g[2]}) rotate(${g[3]})`"
              :font-size="g[4]"
              class="sign"
            >{{ g[0] }}</text>
          </g>
        </defs>
        <g transform="translate(0 -262)">
          <use v-for="(o, i) in offsets" :key="i" href="#tile" :x="o[0]" :y="o[1]" />
        </g>
      </svg>

      <section class="messages">
        <div
          v-for="(m, i) in messages"
          :key="m.id"
          class="row"
          :class="[m.side, { turn: i > 0 && messages[i - 1].side !== m.side }]"
        >
          <article class="bubble outlined" :class="{ tail: m.tail, wide: m.wide, preview: m.kind }">
            <div v-if="m.kind" class="card">
              <strong class="card-title">{{ m.title }}</strong>
              <span class="card-host">
                <svg width="38" height="20" viewBox="0 0 38 20" aria-hidden="true"><path d="M16 2H10A8 8 0 0 0 10 18H16M22 2H28A8 8 0 0 1 28 18H22M12 10H26" fill="none" stroke="#e9edef" stroke-width="4" /></svg>
                {{ m.host }}
              </span>
            </div>
            <div v-if="m.quote" class="quote" :class="m.quote.who">
              <strong class="quote-name">
                <template v-if="m.quote.name">{{ m.quote.name }}</template>
                <template v-else>
                  <span>+92</span>
                  <span class="mask mask-quote">
                    <svg :width="masks.quote.w" :height="masks.quote.h" aria-hidden="true">
                      <template v-for="(row, r) in masks.quote.rows" :key="r">
                        <rect v-for="(c, k) in row" :key="k" :x="k * 12" :y="r * 12" width="12" height="12" :fill="c" />
                      </template>
                    </svg>
                  </span>
                  <span class="tail-digits">2076</span>
                </template>
              </strong>
              <span class="quote-text">{{ m.quote.text }}</span>
            </div>
            <div class="body">
              <a v-if="m.link" class="text" href="#">{{ m.text }}</a>
              <a v-else-if="m.phone" class="text number" href="#">{{ m.phone[0] }}<svg :width="masks.phone.w" :height="masks.phone.h" aria-hidden="true">
                <template v-for="(row, r) in masks.phone.rows" :key="r">
                  <rect v-for="(c, k) in row" :key="k" :x="k * 12" :y="r * 12" width="12" height="12" :fill="c" />
                </template>
              </svg>{{ m.phone[1] }}</a>
              <span v-else class="text">{{ m.text }}</span>
              <span class="meta">
                <svg v-if="m.hiddenTime" class="mask-time" :width="masks.time.w" :height="masks.time.h" aria-hidden="true">
                  <template v-for="(row, r) in masks.time.rows" :key="r">
                    <rect v-for="(c, k) in row" :key="k" :x="k * 11" :y="r * 10" width="11" height="10" :fill="c" />
                  </template>
                </svg>
                <time>{{ m.time }}</time>
                <svg v-if="m.side === 'out'" class="ticks" width="44" height="28" viewBox="0 0 44 28" aria-label="Read"><path d="M2 16L11 25L28 2M21 22L25 25L42 2" fill="none" stroke="#53bdeb" stroke-width="4" stroke-linecap="round" stroke-linejoin="round" /></svg>
              </span>
            </div>
          </article>
          <button v-if="m.kind" class="forward" aria-label="Forward">
            <svg width="56" height="40" viewBox="0 0 56 40"><path d="M3 37C3 18 10 14 24 14H38M24 2L38 15L24 29M38 2L52 15L38 29" fill="none" stroke="#fff" stroke-width="5" stroke-linecap="round" stroke-linejoin="round" /></svg>
          </button>
        </div>
        <div class="row in">
          <article class="bubble next"><i></i></article>
        </div>
      </section>

      <button class="to-bottom" aria-label="Scroll to bottom">
        <svg width="32" height="36" viewBox="0 0 32 36"><path d="M3 3L16 16L29 3M3 20L16 33L29 20" fill="none" stroke="#8d989d" stroke-width="5" stroke-linecap="round" stroke-linejoin="round" /></svg>
      </button>

      <form class="composer" @submit.prevent>
        <div class="field">
          <button type="button" class="icon-btn" aria-label="Stickers">
            <svg width="56" height="56" viewBox="0 0 56 56">
              <path d="M21 3H35Q53 3 53 21V31L31 53H21Q3 53 3 35V21Q3 3 21 3ZM53 31H40Q31 31 31 40V53" fill="none" stroke="#8d989d" stroke-width="5" stroke-linejoin="round" />
              <circle cx="19" cy="20" r="4" fill="#8d989d" /><circle cx="38" cy="20" r="4" fill="#8d989d" />
              <path d="M15 31H36Q30 34 29 40Q18 40 15 31Z" fill="#8d989d" />
            </svg>
          </button>
          <input v-model="draft" class="outlined" type="text" placeholder="Message" aria-label="Message" />
          <button type="button" class="icon-btn clip" aria-label="Attach">
            <svg width="36" height="56" viewBox="0 0 36 56"><path d="M33 13V37A15 15 0 0 1 3 37V14A11 11 0 0 1 25 14V36A6 6 0 0 1 13 36V13" fill="none" stroke="#8d989d" stroke-width="5" stroke-linecap="round" /></svg>
          </button>
          <button type="button" class="icon-btn" aria-label="Camera">
            <svg width="56" height="50" viewBox="0 0 56 50"><path d="M5 8H16L22 3H34L40 8H51Q53 8 53 10V45Q53 47 51 47H5Q3 47 3 45V10Q3 8 5 8Z" fill="none" stroke="#8d989d" stroke-width="5" stroke-linejoin="round" /><circle cx="28" cy="27" r="10" fill="none" stroke="#8d989d" stroke-width="5" /></svg>
          </button>
        </div>
        <button type="button" class="mic" aria-label="Voice message">
          <svg width="40" height="54" viewBox="0 0 40 54"><rect x="12" y="1" width="16" height="33" rx="8" fill="#0b1014" /><path d="M4 28C5 47 35 47 36 28M20 43V51" fill="none" stroke="#0b1014" stroke-width="5" stroke-linecap="round" /></svg>
        </button>
      </form>
    </main>

    <nav class="navbar">
      <button aria-label="Recent apps"><svg width="42" height="34" viewBox="0 0 42 34"><path d="M3 3H39M3 17H39M3 31H39" stroke="#7f7f7f" stroke-width="5" stroke-linecap="round" /></svg></button>
      <button aria-label="Home"><svg width="42" height="42" viewBox="0 0 42 42"><circle cx="21" cy="21" r="18" fill="none" stroke="#7f7f7f" stroke-width="5" /></svg></button>
      <button aria-label="Back"><svg width="26" height="40" viewBox="0 0 26 40"><path d="M23 3L4 20L23 37" fill="none" stroke="#7f7f7f" stroke-width="5" stroke-linecap="round" stroke-linejoin="round" /></svg></button>
    </nav>
  </div>
</template>

<style>
body {
  margin: 0;
  background: #000;
}
</style>

<style scoped>
.app {
  display: flex;
  flex-direction: column;
  height: 100vh;
  background: #0b1014;
  color: #fff;
  font-family: Roboto, "Noto Sans", sans-serif;
}
button {
  margin: 0;
  padding: 0;
  border: 0;
  background: none;
  font: inherit;
  color: inherit;
  cursor: pointer;
}
svg {
  display: block;
  flex: none;
}
.outlined,
.clock,
.percent {
  text-shadow: 2px 0 #000, -2px 0 #000, 0 2px #000, 0 -2px #000, 2px 2px #000, -2px 2px #000, 2px -2px #000, -2px -2px #000, 0 3px 1px #000;
}

/* status bar */
.statusbar {
  display: flex;
  align-items: center;
  justify-content: space-between;
  height: 96px;
  padding: 16px 56px 0 54px;
  flex: none;
}
.clock {
  font-size: 36px;
  font-weight: 500;
}
.indicators {
  display: flex;
  align-items: center;
}
.volte,
.speed,
.sim {
  display: flex;
  flex-direction: column;
  justify-content: space-between;
  height: 36px;
  font-size: 18px;
  font-weight: 700;
  line-height: 16px;
}
.volte {
  margin-left: 9px;
  width: 43px;
}
.volte-top {
  display: flex;
  align-items: center;
}
.volte-top small {
  font-size: 14px;
}
.speed {
  margin-left: 16px;
  width: 40px;
}
.sim {
  margin-left: 9px;
  width: 54px;
}
.net {
  line-height: 12px;
}
.battery {
  margin-left: 6px;
}
.percent {
  margin-left: 9px;
  font-size: 33px;
  font-weight: 500;
}

/* header */
.header {
  display: flex;
  align-items: center;
  height: 149px;
  padding: 0 55px 0 42px;
  border-bottom: 1px solid #1d2327;
  flex: none;
}
.avatar {
  display: flex;
  align-items: center;
  justify-content: center;
  width: 98px;
  height: 98px;
  margin-left: 55px;
  border-radius: 50%;
  background: #103529;
  color: #6cf28e;
  font-size: 44px;
  font-weight: 500;
  text-shadow: 2px 0 #000, -2px 0 #000, 0 2px #000, 0 -2px #000;
}
.title {
  display: flex;
  align-items: center;
  flex: 1;
  margin: 0 0 0 33px;
  font-size: 46px;
  font-weight: 400;
  white-space: nowrap;
}
.mask {
  margin-left: 12px;
}
.mask-title {
  position: relative;
  z-index: 1;
}
.mask-title + .tail-digits {
  margin-left: -10px;
}
.call {
  display: flex;
  align-items: center;
  gap: 32px;
}
.more {
  margin-left: 57px;
}

/* chat */
.chat {
  position: relative;
  display: flex;
  flex-direction: column;
  flex: 1;
  min-height: 0;
  overflow: hidden;
}
.wallpaper {
  position: absolute;
  inset: 0;
  width: 100%;
  height: 100%;
  fill: #0b1014;
  stroke: #252c30;
  stroke-width: 2;
}
.wallpaper path {
  fill: none;
  stroke-linecap: round;
  stroke-linejoin: round;
}
.wallpaper circle {
  fill: none;
}
.ink {
  vector-effect: non-scaling-stroke;
}
.sign {
  fill: #252c30;
  stroke: none;
  font-family: Lato, sans-serif;
  font-weight: 400;
  text-anchor: middle;
}
.messages {
  position: relative;
  display: flex;
  flex-direction: column;
  gap: 6px;
  flex: 1;
  min-height: 0;
  padding: 0 47px;
  overflow: hidden;
}
.row {
  display: flex;
  align-items: center;
  flex: none;
}
.row.out {
  justify-content: flex-end;
}
.turn {
  margin-top: 22px;
}
.bubble {
  position: relative;
  display: flex;
  flex-direction: column;
  border-radius: 34px;
  background: #1f272a;
}
.out .bubble {
  background: #144d37;
}
.tail::before {
  content: "";
  position: absolute;
  top: 0;
  left: -20px;
  width: 54px;
  height: 34px;
  background: #1f272a;
  clip-path: polygon(4px 0, 100% 0, 100% 100%, 20px 100%, 20px 28px, 1px 7px, 0 3px);
}
.out .tail::before {
  left: auto;
  right: -20px;
  background: #144d37;
  clip-path: polygon(0 0, 50px 0, 54px 3px, 53px 7px, 34px 28px, 34px 100%, 0 100%);
}
.body {
  position: relative;
  display: flex;
  align-items: flex-end;
  justify-content: space-between;
  min-height: 90px;
  padding: 0 24px 0 27px;
  box-sizing: border-box;
}
.text {
  align-self: flex-start;
  margin-top: 17px;
  font-size: 44px;
  line-height: 52px;
  white-space: nowrap;
}
a.text {
  color: #8cecfd;
  text-decoration: underline;
  text-decoration-color: #53bdeb;
  text-decoration-thickness: 3px;
  text-decoration-skip-ink: none;
  text-underline-offset: 3px;
}
a.number {
  font-weight: 700;
  text-decoration: none;
  background: linear-gradient(#53bdeb, #53bdeb) 0 44px / 100% 3px no-repeat;
}
.number svg {
  display: inline-block;
  vertical-align: baseline;
}
.meta {
  display: flex;
  align-items: center;
  margin: 0 0 7px 40px;
  font-size: 33px;
  line-height: 40px;
  white-space: nowrap;
}
.out .meta {
  margin: 0 0 10px 22px;
}
.ticks {
  margin-left: 13px;
}
.mask-time {
  margin-right: 8px;
}
.wide .body {
  flex-direction: column;
  padding-right: 23px;
}
.wide .text {
  margin-right: 5px;
}
.wide .meta {
  margin: 19px 0 6px;
}
.preview {
  width: 791px;
  border-radius: 0 0 34px 34px;
}
.card {
  display: flex;
  flex-direction: column;
  height: 130px;
  margin: 0 11px;
  padding: 0 22px;
  border-radius: 0 0 22px 22px;
  background: #1d242a;
}
.card-title {
  font-size: 40px;
  font-weight: 500;
  line-height: 34px;
}
.card-host {
  display: flex;
  align-items: center;
  gap: 15px;
  margin-top: 28px;
  font-size: 39px;
  line-height: 48px;
}
.preview .body {
  min-height: 101px;
  padding-top: 11px;
}
.forward {
  display: flex;
  align-items: center;
  justify-content: center;
  width: 86px;
  height: 86px;
  margin: 0 0 40px 23px;
  border-radius: 50%;
  background: rgba(14, 24, 31, 0.8);
}
.quote {
  display: flex;
  flex-direction: column;
  min-width: 330px;
  box-sizing: border-box;
  margin: 11px 10px 0;
  padding: 15px 23px 11px 34px;
  border-radius: 24px;
  background: linear-gradient(90deg, #a791ff 11px, #1d242a 11px);
  overflow: hidden;
  font-size: 39px;
  line-height: 53px;
}
.quote.me {
  background: linear-gradient(90deg, #fafafa 11px, #1d242a 11px);
}
.quote-name {
  display: flex;
  align-items: center;
  font-weight: 500;
  color: #e4daff;
}
.me .quote-name {
  color: #fff;
}
.mask-quote {
  position: relative;
  z-index: 1;
  margin-left: 9px;
}
.mask-quote + .tail-digits {
  margin-left: -11px;
}
.next {
  width: 512px;
  height: 90px;
}
.next i {
  width: 293px;
  height: 3px;
  margin: 23px 0 0 32px;
  background: repeating-linear-gradient(90deg, #0b1014 0 17px, #1f272a 17px 25px);
}

/* floating controls and composer */
.to-bottom {
  position: absolute;
  right: 34px;
  bottom: 197px;
  display: flex;
  align-items: center;
  justify-content: center;
  width: 88px;
  height: 88px;
  border-radius: 50%;
  background: #27343c;
  box-shadow: 0 2px 4px rgba(0, 0, 0, 0.4);
}
.composer {
  position: relative;
  display: flex;
  align-items: flex-end;
  gap: 24px;
  margin: 6px 26px 13px 25px;
  flex: none;
}
.field {
  display: flex;
  align-items: center;
  flex: 1;
  min-width: 0;
  height: 129px;
  padding: 0 36px;
  border-radius: 65px;
  background: #1f272a;
  box-sizing: border-box;
}
.field input {
  flex: 1;
  min-width: 0;
  margin-left: 36px;
  padding: 2px 0 0;
  border: 0;
  outline: 0;
  background: none;
  color: #fff;
  font: 400 50px/60px Roboto, "Noto Sans", sans-serif;
}
.field input::placeholder {
  color: #fff;
  opacity: 1;
}
.clip {
  margin-right: 87px;
}
.mic {
  display: flex;
  align-items: center;
  justify-content: center;
  width: 132px;
  height: 132px;
  margin-bottom: 2px;
  border-radius: 50%;
  background: #fafafa;
  box-shadow: 0 2px 6px rgba(0, 0, 0, 0.5);
}

/* system navigation */
.navbar {
  display: grid;
  grid-template-columns: repeat(3, 1fr);
  height: 116px;
  padding: 0 82px;
  background: #000;
  flex: none;
}
.navbar button {
  display: flex;
  align-items: center;
  justify-content: center;
}
</style>
